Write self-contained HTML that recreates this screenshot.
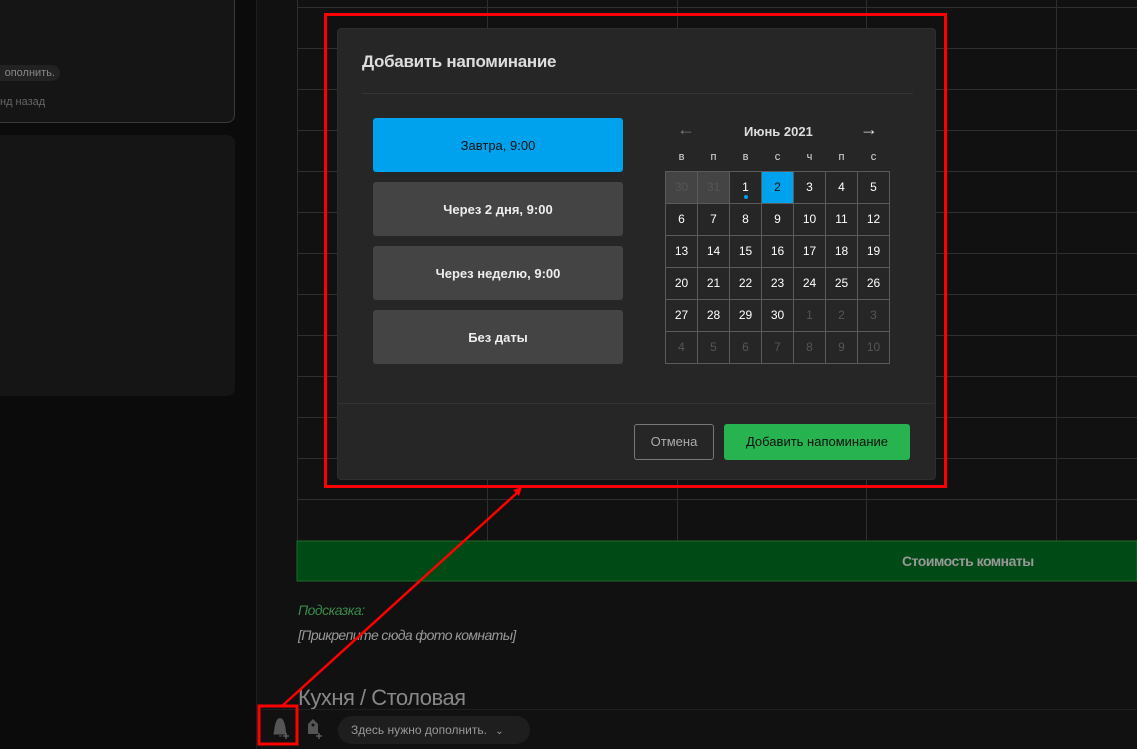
<!DOCTYPE html>
<html><head><meta charset="utf-8"><style>
*{margin:0;padding:0;box-sizing:border-box}
body{width:1137px;height:749px;overflow:hidden;background:#111;font-family:"Liberation Sans","DejaVu Sans",sans-serif;position:relative}
.abs{position:absolute}
.left{left:0;top:0;width:257px;height:749px;background:#0b0b0b;border-right:1px solid #1e1e1e}
.card1{left:-10px;top:-10px;width:245px;height:133px;background:#151515;border:1px solid #3a3a3a;border-radius:8px}
.card2{left:-10px;top:135px;width:245px;height:261px;background:#151515;border-radius:8px}
.modal{left:337px;top:28px;width:599px;height:452px;background:#262626;border-radius:4px;border:1px solid #2e2e2e}
.btn{position:absolute;left:35px;width:250px;height:54px;border-radius:3px;background:#444;color:#eee;font-size:13px;font-weight:bold;display:flex;align-items:center;justify-content:center}
table{border-collapse:collapse;position:absolute;left:327px;top:115px}
td{width:32px;height:32px;border:1px solid #5a5a5a;text-align:center;color:#fff;font-size:12px;padding:0}
td.o{color:#555}
th{color:#ddd;font-size:11px;font-weight:normal;height:27px}
</style></head><body>
<div class="abs left"></div>
<div class="abs card1"></div>
<div class="abs" style="left:-10px;top:65px;width:70px;height:16px;background:#222;border-radius:8px;color:#888;font-size:11px;line-height:16px;text-align:right;padding-right:5px">ополнить.</div>
<div class="abs" style="left:0;top:96px;color:#666;font-size:11px">нд назад</div>
<div class="abs card2"></div>
<svg class="abs" style="left:0;top:0" width="1137" height="749">
<g stroke="#2f2f2f" stroke-width="1">
<line x1="297.5" y1="0" x2="297.5" y2="581"/><line x1="487.5" y1="0" x2="487.5" y2="541"/><line x1="677.5" y1="0" x2="677.5" y2="541"/><line x1="866.5" y1="0" x2="866.5" y2="581"/><line x1="1056.5" y1="0" x2="1056.5" y2="581"/>
<line x1="297" y1="7.5" x2="1137" y2="7.5"/><line x1="297" y1="48.5" x2="1137" y2="48.5"/><line x1="297" y1="89.5" x2="1137" y2="89.5"/><line x1="297" y1="130.5" x2="1137" y2="130.5"/><line x1="297" y1="171.5" x2="1137" y2="171.5"/><line x1="297" y1="212.5" x2="1137" y2="212.5"/><line x1="297" y1="253.5" x2="1137" y2="253.5"/><line x1="297" y1="294.5" x2="1137" y2="294.5"/><line x1="297" y1="335.5" x2="1137" y2="335.5"/><line x1="297" y1="376.5" x2="1137" y2="376.5"/><line x1="297" y1="417.5" x2="1137" y2="417.5"/><line x1="297" y1="458.5" x2="1137" y2="458.5"/><line x1="297" y1="499.5" x2="1137" y2="499.5"/>
</g>
<rect x="297" y="541" width="840" height="40" fill="#004a16" stroke="#1f6a2a"/>
</svg>
<div class="abs" style="left:902px;top:553px;color:#999;font-size:14px;font-weight:bold;letter-spacing:-0.5px">Стоимость комнаты</div>
<div class="abs" style="left:298px;top:602px;color:#3a8a4a;font-size:14px;font-style:italic;letter-spacing:-0.5px">Подсказка:</div>
<div class="abs" style="left:298px;top:627px;color:#999;font-size:14px;font-style:italic;letter-spacing:-0.6px">[Прикрепите сюда фото комнаты]</div>
<div class="abs" style="left:298px;top:685px;color:#888;font-size:22px;letter-spacing:-0.5px">Кухня / Столовая</div>
<div class="abs" style="left:258px;top:709px;width:879px;height:40px;background:#111;border-top:1px solid #1f1f1f"></div>
<svg class="abs" style="left:270px;top:716px" width="60" height="26"><path d="M4 18 C5 14 5 8 7 5 C8 2 12 2 13 5 C15 8 15 14 16 18Z M9 20h3" fill="#555" stroke="#555"/><path d="M13 20h6M16 17v6" stroke="#666" stroke-width="1.3"/>
<path d="M38 8l5-5 5 5v10h-10z" fill="#555"/><circle cx="43" cy="9" r="1.5" fill="#111"/><path d="M46 20h6M49 17v6" stroke="#666" stroke-width="1.3"/></svg>
<div class="abs" style="left:338px;top:716px;width:192px;height:28px;border-radius:14px;background:#1e1e1e;color:#999;font-size:12px;line-height:28px;padding-left:13px">Здесь нужно дополнить. <span style="font-size:10px;margin-left:5px">&#8964;</span></div>
<div class="abs modal">
<div class="abs" style="left:24px;top:23px;color:#ddd;font-size:17px;font-weight:bold;letter-spacing:-0.3px">Добавить напоминание</div>
<div class="abs" style="left:24px;top:64px;width:551px;height:1px;background:#353535"></div>
<div class="btn" style="top:89px;background:#00a2ed;color:#111;font-weight:normal">Завтра, 9:00</div>
<div class="btn" style="top:153px">Через 2 дня, 9:00</div>
<div class="btn" style="top:217px">Через неделю, 9:00</div>
<div class="btn" style="top:281px">Без даты</div>
<div class="abs" style="left:339px;top:90px;color:#777;font-size:18px">&#8592;</div>
<div class="abs" style="left:406px;top:95px;color:#ddd;font-size:13px;font-weight:bold">Июнь 2021</div>
<div class="abs" style="left:522px;top:90px;color:#ddd;font-size:18px">&#8594;</div>
<table>
<tr><th>в</th><th>п</th><th>в</th><th>с</th><th>ч</th><th>п</th><th>с</th></tr>
<tr><td class="o" style="background:#444">30</td><td class="o" style="background:#444">31</td><td style="position:relative">1<span style="position:absolute;left:14px;top:23px;width:4px;height:4px;border-radius:2px;background:#00a2ed"></span></td><td style="background:#00a2ed;color:#111">2</td><td>3</td><td>4</td><td>5</td></tr>
<tr><td>6</td><td>7</td><td>8</td><td>9</td><td>10</td><td>11</td><td>12</td></tr>
<tr><td>13</td><td>14</td><td>15</td><td>16</td><td>17</td><td>18</td><td>19</td></tr>
<tr><td>20</td><td>21</td><td>22</td><td>23</td><td>24</td><td>25</td><td>26</td></tr>
<tr><td>27</td><td>28</td><td>29</td><td>30</td><td class="o">1</td><td class="o">2</td><td class="o">3</td></tr>
<tr><td class="o">4</td><td class="o">5</td><td class="o">6</td><td class="o">7</td><td class="o">8</td><td class="o">9</td><td class="o">10</td></tr>
</table>
<div class="abs" style="left:0;top:374px;width:597px;height:1px;background:#333"></div>
<div class="abs" style="left:296px;top:395px;width:80px;height:36px;border:1px solid #777;border-radius:3px;color:#aaa;font-size:13px;line-height:34px;text-align:center">Отмена</div>
<div class="abs" style="left:386px;top:395px;width:186px;height:36px;background:#27b34f;border-radius:3px;color:#111;font-size:13px;line-height:36px;text-align:center">Добавить напоминание</div>
</div>
<svg class="abs" style="left:0;top:0;pointer-events:none" width="1137" height="749">
<rect x="325.5" y="14.5" width="620" height="472" fill="none" stroke="#f00" stroke-width="3"/>
<rect x="259" y="706" width="38" height="38" fill="none" stroke="#f00" stroke-width="3"/>
<line x1="282" y1="706" x2="518" y2="492" stroke="#f00" stroke-width="2.5"/>
<path d="M522 487l-9 3 6 6z" fill="#f00"/>
</svg>
</body></html>
